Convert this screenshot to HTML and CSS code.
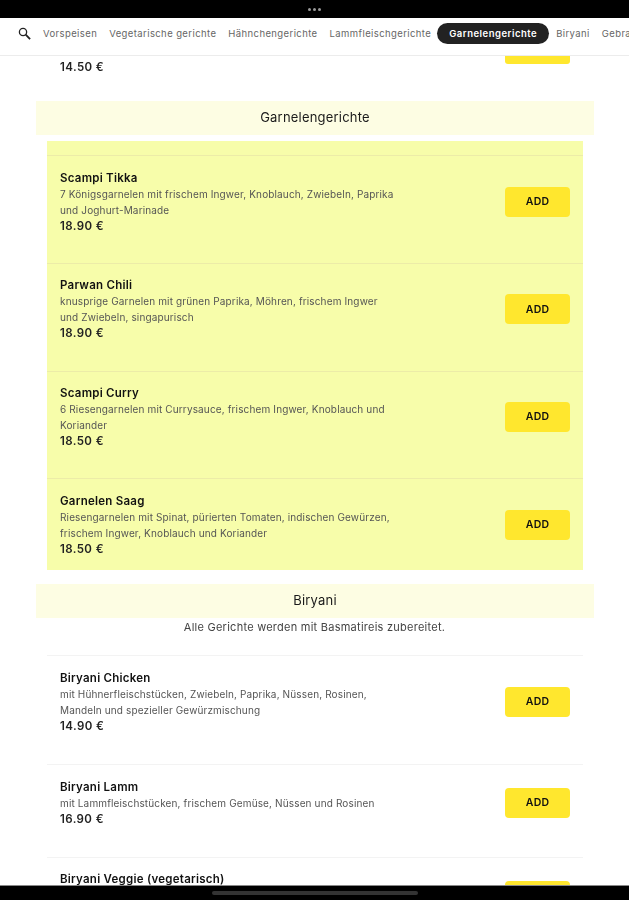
FILE: index.html
```html
<!DOCTYPE html>
<html lang="de">
<head>
<meta charset="utf-8">
<title>Speisekarte</title>
<link rel="stylesheet" href="styles.css">
</head>
<body>
<div class="app">
  <div class="status-bar"><span class="dot"></span><span class="dot"></span><span class="dot"></span></div>
  <nav class="tabs">
    <svg class="search" viewBox="0 0 14 14" width="13" height="13"><circle cx="5.4" cy="5.4" r="3.9" fill="none" stroke="#222" stroke-width="1.4"/><path d="M8.3 8.3 L13 13" stroke="#222" stroke-width="2"/></svg>
    <span class="tab">Vorspeisen</span>
    <span class="tab">Vegetarische gerichte</span>
    <span class="tab">Hähnchengerichte</span>
    <span class="tab">Lammfleischgerichte</span>
    <span class="tab tab-active">Garnelengerichte</span>
    <span class="tab">Biryani</span>
    <span class="tab">Gebra</span>
  </nav>
  <main class="content">
    <div class="tail">
      <span class="price">14.50 €</span>
      <span class="btn-tail"></span>
    </div>

    <h2 class="section-head head-first">Garnelengerichte</h2>
    <section class="list list-hl">
      <article class="item">
        <div class="info">
          <h3 class="name">Scampi Tikka</h3>
          <p class="desc">7 Königsgarnelen mit frischem Ingwer, Knoblauch, Zwiebeln, Paprika und Joghurt-Marinade</p>
          <p class="price">18.90 €</p>
        </div>
        <button class="add">ADD</button>
      </article>
      <article class="item">
        <div class="info">
          <h3 class="name">Parwan Chili</h3>
          <p class="desc">knusprige Garnelen mit grünen Paprika, Möhren, frischem Ingwer und Zwiebeln, singapurisch</p>
          <p class="price">18.90 €</p>
        </div>
        <button class="add">ADD</button>
      </article>
      <article class="item">
        <div class="info">
          <h3 class="name">Scampi Curry</h3>
          <p class="desc">6 Riesengarnelen mit Currysauce, frischem Ingwer, Knoblauch und Koriander</p>
          <p class="price">18.50 €</p>
        </div>
        <button class="add">ADD</button>
      </article>
      <article class="item item-last">
        <div class="info">
          <h3 class="name">Garnelen Saag</h3>
          <p class="desc">Riesengarnelen mit Spinat, pürierten Tomaten, indischen Gewürzen, frischem Ingwer, Knoblauch und Koriander</p>
          <p class="price">18.50 €</p>
        </div>
        <button class="add">ADD</button>
      </article>
    </section>

    <h2 class="section-head head-second">Biryani</h2>
    <p class="note">Alle Gerichte werden mit Basmatireis zubereitet.</p>
    <section class="list list-plain">
      <article class="item">
        <div class="info">
          <h3 class="name">Biryani Chicken</h3>
          <p class="desc">mit Hühnerfleischstücken, Zwiebeln, Paprika, Nüssen, Rosinen, Mandeln und spezieller Gewürzmischung</p>
          <p class="price">14.90 €</p>
        </div>
        <button class="add">ADD</button>
      </article>
      <article class="item">
        <div class="info">
          <h3 class="name">Biryani Lamm</h3>
          <p class="desc">mit Lammfleischstücken, frischem Gemüse, Nüssen und Rosinen</p>
          <p class="price">16.90 €</p>
        </div>
        <button class="add">ADD</button>
      </article>
      <article class="item item-end">
        <div class="info">
          <h3 class="name">Biryani Veggie (vegetarisch)</h3>
        </div>
        <button class="add">ADD</button>
      </article>
    </section>
  </main>
  <div class="home-bar"><span class="home-pill"></span></div>
</div>
</body>
</html>
```
FILE: styles.css
```css
* { box-sizing: border-box; }
html, body { margin: 0; padding: 0; height: 100%; background: #fff; }
body { font-family: Inter, "Liberation Sans", sans-serif; color: #1a1a1a; }
.app { width: 629px; height: 900px; display: flex; flex-direction: column; overflow: hidden; filter: blur(0.35px); }
.status-bar { flex: 0 0 18px; background: #000; display: flex; justify-content: center; align-items: center; gap: 2px; }
.dot { width: 3px; height: 3px; border-radius: 50%; background: #9a9a9a; }
.tabs { flex: 0 0 38px; display: flex; align-items: center; padding: 0 0 6px 18px; border-bottom: 1px solid #ececec; white-space: nowrap; overflow: hidden; background: #fff; }
.search { flex: none; margin-right: 12px; }
.tab { font-size: 9.5px; letter-spacing: 0.4px; color: #666; margin-right: 12px; flex: none; }
.tab-active { background: #222; color: #fff; font-weight: 600; letter-spacing: 0.5px; border-radius: 11px; height: 21px; line-height: 21px; padding: 0 12px; margin: 0 7px 0 -6px; }
.content { flex: 1; min-height: 0; overflow: hidden; }
.tail { height: 45px; display: flex; justify-content: space-between; align-items: flex-start; padding: 3px 59px 0 60px; }
.tail .price { line-height: 16px; }
.btn-tail { width: 65px; height: 8px; margin-top: -3px; background: #ffe72e; border-radius: 0 0 3px 3px; }
.section-head { margin: 0 35px 0 36px; height: 34px; line-height: 33px; text-align: center; font-size: 13px; font-weight: 400; background: #fdfde3; letter-spacing: 0.2px; }
.head-second { margin-top: 14px; }
.list { margin: 0 46px 0 47px; }
.list-hl { margin-top: 6px; padding-top: 14.4px; background: #f7fdaa; }
.item { display: flex; justify-content: space-between; align-items: center; padding: 13.2px 13px 29.47px; border-top: 1px solid #ececa8; }
.list-plain .item { border-top-color: #f3f3f3; padding: 13.6px 13px 30.4px; }
.list-plain .item-end { padding: 13px 13px 0; align-items: flex-start; }
.item-end .add { margin-top: 10px; }
.list-hl .item-last { padding-bottom: 13.4px; }
.info { width: 335px; }
.name { margin: 0; font-size: 11.5px; line-height: 16px; font-weight: 600; color: #111; letter-spacing: 0.25px; }
.desc { margin: 0; font-size: 10px; line-height: 16px; color: #555; letter-spacing: 0.14px; }
.price { margin: 0; font-size: 11.5px; line-height: 16px; font-weight: 600; color: #222; letter-spacing: 0.4px; }
.add { flex: none; width: 65px; height: 30px; border: 0; border-radius: 4px; background: #ffe72e; font-family: inherit; font-size: 10.5px; font-weight: 600; color: #111; letter-spacing: 0.2px; padding: 0; }
.note { margin: 0 0 19px; height: 18px; line-height: 18px; text-align: center; font-size: 11px; color: #444; letter-spacing: 0.25px; }
.home-bar { flex: 0 0 15px; background: #000; display: flex; justify-content: center; align-items: center; border-top: 1px solid #888; }
.home-pill { width: 206px; height: 4px; border-radius: 2px; background: #333; }
```
